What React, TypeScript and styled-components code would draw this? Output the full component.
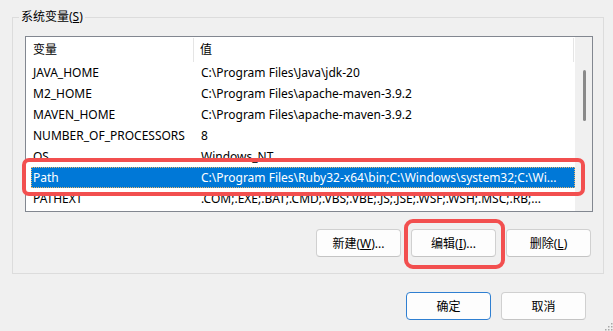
import styled, { createGlobalStyle } from "styled-components"

const GlobalStyle = createGlobalStyle`
  html, body {
    margin: 0;
    padding: 0;
    background: #f0f0f0;
  }
  body {
    font-family: "Segoe UI", "Noto Sans", "Noto Sans CJK SC", sans-serif;
    font-size: 12px;
    color: #000;
  }
`

const vars = [
  { name: "JAVA_HOME", value: "C:\\Program Files\\Java\\jdk-20" },
  { name: "M2_HOME", value: "C:\\Program Files\\apache-maven-3.9.2" },
  { name: "MAVEN_HOME", value: "C:\\Program Files\\apache-maven-3.9.2" },
  { name: "NUMBER_OF_PROCESSORS", value: "8" },
  { name: "OS", value: "Windows_NT" },
  { name: "Path", value: "C:\\Program Files\\Ruby32-x64\\bin;C:\\Windows\\system32;C:\\Wi...", selected: true },
  { name: "PATHEXT", value: ".COM;.EXE;.BAT;.CMD;.VBS;.VBE;.JS;.JSE;.WSF;.WSH;.MSC;.RB;..." },
]

const App = () => {
  return (
    <>
      <GlobalStyle />
      <Page>
        <Group>
          <Legend>
            系统变量(<u>S</u>)
          </Legend>
          <ListBox>
            <ListPane>
              <Header>
                <HeaderCell>变量</HeaderCell>
                <HeaderCell $last>值</HeaderCell>
              </Header>
              {vars.map((v) => (
                <Row key={v.name} $selected={v.selected}>
                  <NameCell>{v.name}</NameCell>
                  <ValueCell>{v.value}</ValueCell>
                  {v.selected && <Mark $kind="row" />}
                </Row>
              ))}
            </ListPane>
            <ScrollBar>
              <Thumb />
            </ScrollBar>
          </ListBox>
          <ButtonRow>
            <Button>
              新建(<u>W</u>)...
            </Button>
            <Marked>
              <Button>
                编辑(<u>I</u>)...
              </Button>
              <Mark $kind="button" />
            </Marked>
            <Button>
              删除(<u>L</u>)
            </Button>
          </ButtonRow>
        </Group>
        <Footer>
          <Button $primary>确定</Button>
          <Button>取消</Button>
        </Footer>
        <Grip width="9" height="9" viewBox="0 0 9 9">
          {[
            [7, 1],
            [4, 4],
            [7, 4],
            [1, 7],
            [4, 7],
            [7, 7],
          ].map(([x, y]) => (
            <rect key={`${x}-${y}`} x={x} y={y} width="1.5" height="1.5" fill="#a8a8a8" />
          ))}
        </Grip>
      </Page>
    </>
  )
}

const Page = styled.div`
  position: relative;
  width: 613px;
  height: 331px;
  box-sizing: border-box;
  padding: 9px 9px 0 12px;
  overflow: hidden;
`
const Group = styled.fieldset`
  margin: 0;
  min-width: 0;
  border: 1px solid #dcdcdc;
  padding: 11px 10px 16px 12px;
`
const Legend = styled.legend`
  margin-left: -6px;
  padding: 0 2px;
  line-height: 16px;
  height: 16px;
`
const ListBox = styled.div`
  display: grid;
  grid-template-columns: 1fr 17px;
  height: 176px;
  box-sizing: border-box;
  border: 1px solid #828790;
  background: #fff;
`
const ListPane = styled.div`
  display: flex;
  flex-direction: column;
  min-width: 0;
`
const Header = styled.div`
  display: grid;
  grid-template-columns: 168px 1fr;
  height: 25px;
`
const HeaderCell = styled.div<{ $last?: boolean }>`
  margin-top: 1px;
  padding-left: ${(p) => (p.$last ? 6 : 7)}px;
  line-height: 24px;
  border-right: 1px solid #e5e5e5;
  margin-right: ${(p) => (p.$last ? 1 : 0)}px;
`
const Row = styled.div<{ $selected?: boolean }>`
  position: ${(p) => (p.$selected ? "relative" : "static")};
  display: grid;
  grid-template-columns: 163px 1fr;
  height: 21px;
  line-height: 21px;
  padding-left: 5px;
  background: ${(p) => (p.$selected ? "#0078d7" : "transparent")};
  background-clip: content-box;
  color: ${(p) => (p.$selected ? "#fff" : "#000")};
  white-space: nowrap;

  ${(p) =>
    p.$selected &&
    `
    &::before {
      content: "";
      position: absolute;
      left: 5px;
      top: 0;
      right: 0;
      bottom: 0;
      border: 1px dotted #e8b56a;
    }
  `}
`
const NameCell = styled.div`
  padding-left: 2px;
  overflow: hidden;
`
const ValueCell = styled.div`
  padding-left: 7px;
  overflow: hidden;
`
const ScrollBar = styled.div`
  display: flex;
  justify-content: center;
  padding-top: 33px;
  padding-left: 1px;
  background: #f0f0f0;
`
const Thumb = styled.div`
  width: 3px;
  height: 51px;
  border-radius: 2px;
  background: #8a8a8a;
`
const ButtonRow = styled.div`
  display: flex;
  justify-content: flex-end;
  gap: 10px;
  margin-top: 17px;
  padding-right: 2px;
`
const Footer = styled.div`
  display: flex;
  justify-content: flex-end;
  gap: 10px;
  margin-top: 18px;
  margin-right: 18px;
`
const Button = styled.div<{ $primary?: boolean }>`
  width: 85px;
  height: 28px;
  box-sizing: border-box;
  display: flex;
  align-items: center;
  justify-content: center;
  border: 1px solid ${(p) => (p.$primary ? "#2f7fd1" : "#d0d0d0")};
  border-bottom-color: ${(p) => (p.$primary ? "#2f7fd1" : "#c4c4c4")};
  border-radius: 4px;
  background: #fdfdfd;
  white-space: nowrap;
`
const Marked = styled.div`
  position: relative;
`
const Mark = styled.div<{ $kind: "row" | "button" }>`
  position: absolute;
  box-sizing: border-box;
  border: 4px solid #f24f4f;
  ${(p) =>
    p.$kind === "row"
      ? `
    left: -4px;
    top: -9px;
    width: 563px;
    height: 38px;
    border-radius: 7px;
  `
      : `
    left: -7px;
    top: -10px;
    width: 101px;
    height: 50px;
    border-radius: 9px;
  `}
`
const Grip = styled.svg`
  position: absolute;
  right: 0;
  bottom: 0;
`

export default App
